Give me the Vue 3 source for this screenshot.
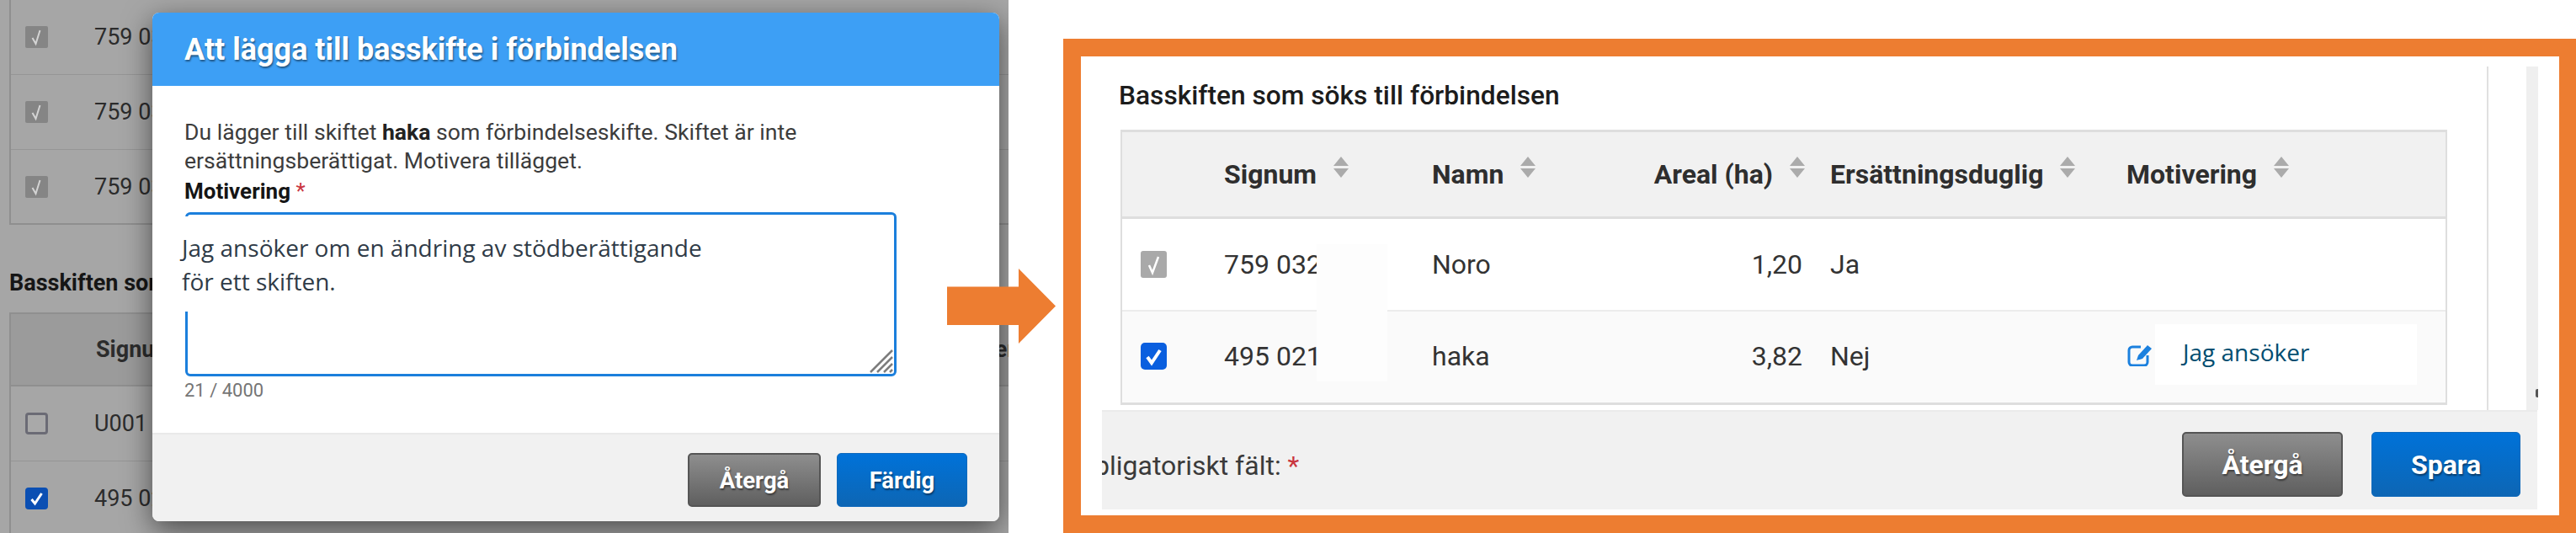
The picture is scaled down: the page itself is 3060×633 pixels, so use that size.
<template>
  <main class="page">
    <section class="backdrop">
      <div class="bg-table bg-table-top">
        <div v-for="row in 3" :key="row" class="bg-row">
          <span class="box box-dim"><svg viewBox="0 0 26 26"><path d="M8 14l4 7 5-16" /></svg></span>
          <span class="bg-sig">759 032</span>
        </div>
      </div>
      <h2 class="bg-title">Basskiften som söks till förbindelsen</h2>
      <div class="bg-table bg-table-low">
        <div class="bg-head">
          <span class="bg-sig">Signum</span>
          <span class="bg-last">Motivering</span>
        </div>
        <div class="bg-row">
          <span class="box box-empty"></span>
          <span class="bg-sig">U001</span>
        </div>
        <div class="bg-row">
          <span class="box box-dark"><svg viewBox="0 0 26 26"><path d="M7 14l4 5 8-12" /></svg></span>
          <span class="bg-sig">495 021</span>
        </div>
      </div>

      <div class="modal">
        <header class="modal-head">Att lägga till basskifte i förbindelsen</header>
        <div class="modal-body">
          <p>Du lägger till skiftet <b>haka</b> som förbindelseskifte. Skiftet är inte<br />ersättningsberättigat. Motivera tillägget.</p>
          <label>Motivering <span class="star">*</span></label>
          <div class="area">
            <div class="pasted">Jag ansöker om en ändring av stödberättigande<br />för ett skiften.</div>
            <svg class="grip" viewBox="0 0 28 28">
              <path d="M1 27L27 1M9 27L27 9M17 27L27 17M24 27l3-3" />
            </svg>
          </div>
          <div class="count">21 / 4000</div>
        </div>
        <footer class="modal-foot">
          <button class="btn btn-grey">Återgå</button>
          <button class="btn btn-blue">Färdig</button>
        </footer>
      </div>
    </section>

    <svg class="arrow" viewBox="0 0 129 90"><path d="M0 21.5h85V0l44 44.500-44 44.500V67H0z" /></svg>

    <section class="frame">
      <div class="panel">
        <div class="panel-body">
          <div class="content">
            <h2>Basskiften som söks till förbindelsen</h2>
            <div class="table">
              <div class="row head">
                <span></span>
                <span v-for="col in columns" :key="col.label" class="th" :class="col.cls">
                  {{ col.label }}
                  <svg class="sort" viewBox="0 0 18 25"><path d="M9 0l9 11H0zM0 14h18l-9 11z" /></svg>
                </span>
              </div>
              <div v-for="row in rows" :key="row.name" class="row" :class="{ alt: row.checked }">
                <span class="check" :class="row.checked ? 'check-on' : 'check-off'">
                  <svg viewBox="0 0 31 32"><path :d="row.checked ? 'M8 17l5 7 10-15' : 'M10 17l4 9 7-19'" /></svg>
                </span>
                <span>{{ row.sig }}</span>
                <span>{{ row.name }}</span>
                <span class="num">{{ row.area }}</span>
                <span>{{ row.ok }}</span>
                <span v-if="row.checked" class="motive">
                  <svg class="edit" viewBox="0 0 32 26">
                    <path class="edit-frame" d="M17 3H7a4 4 0 0 0-4 4v14a4 4 0 0 0 4 4h14a4 4 0 0 0 4-4v-8" />
                    <path class="edit-pen" d="M12 19l2-6L25 1l5 4-11 12z" />
                  </svg>
                  <span class="note">Jag ansöker</span>
                </span>
              </div>
              <div class="patch"></div>
            </div>
          </div>
          <div class="gutter"><i></i></div>
        </div>
        <footer class="panel-foot">
          <span class="required-clip"><span class="required">Obligatoriskt fält: <span class="star">*</span></span></span>
          <button class="btn btn-grey big back">Återgå</button>
          <button class="btn btn-blue big save">Spara</button>
        </footer>
      </div>
    </section>
  </main>
</template>

<script setup>
const columns = [
  { label: 'Signum', cls: '' },
  { label: 'Namn', cls: '' },
  { label: 'Areal (ha)', cls: 'right' },
  { label: 'Ersättningsduglig', cls: '' },
  { label: 'Motivering', cls: '' }
]

const rows = [
  { sig: '759 032', name: 'Noro', area: '1,20', ok: 'Ja', checked: false },
  { sig: '495 021', name: 'haka', area: '3,82', ok: 'Nej', checked: true }
]
</script>

<style>
html,
body {
  background: #fff;
}
</style>

<style scoped>
.page {
  position: relative;
  display: flex;
  width: 3060px;
  height: 633px;
  overflow: hidden;
  background: #fff;
  font-family: Roboto, "Liberation Sans", sans-serif;
  color: #333;
}

/* left screenshot: dimmed page behind the dialog */
.backdrop {
  position: relative;
  flex: 0 0 1198px;
  height: 633px;
  overflow: hidden;
  background: #a6a6a6;
  color: #2c2c2c;
}

.bg-table {
  margin-left: 11px;
  border-left: 2px solid #8f8f8f;
  font-size: 27px;
}

.bg-table-top {
  height: 265px;
  border-bottom: 2px solid #8f8f8f;
}

.bg-row {
  display: flex;
  align-items: center;
  height: 88px;
  border-bottom: 1px solid #959595;
}

.bg-table-top .bg-row:last-child {
  border-bottom: 0;
}

.bg-head {
  position: relative;
  display: flex;
  align-items: center;
  height: 84px;
  border-top: 2px solid #8f8f8f;
  border-bottom: 2px solid #8f8f8f;
  background: #9b9b9b;
  font-weight: 700;
  font-size: 27px;
}

.bg-sig {
  margin-left: 55px;
  white-space: nowrap;
}

.bg-head .bg-sig {
  margin-left: 101px;
}

.bg-last {
  position: absolute;
  left: 1100px;
}

.bg-title {
  margin: 53px 0 0 11px;
  height: 51px;
  font-size: 27px;
  font-weight: 700;
  line-height: 32px;
  color: #161616;
  white-space: nowrap;
}

.box {
  flex: none;
  width: 27px;
  height: 26px;
  margin-left: 17px;
  border-radius: 2px;
  box-sizing: border-box;
}

.box svg {
  display: block;
  width: 100%;
  height: 100%;
  fill: none;
  stroke: #d4d4d4;
  stroke-width: 2;
}

.box-dim {
  background: #858585;
}

.box-empty {
  border: 3px solid #6b6b75;
  border-radius: 4px;
  background: #a9a9a9;
}

.box-dark {
  border-radius: 4px;
  background: #0b4fb3;
}

.box-dark svg {
  stroke: #fff;
  stroke-width: 3;
}

.modal {
  position: absolute;
  left: 181px;
  top: 15px;
  display: flex;
  flex-direction: column;
  width: 1006px;
  height: 604px;
  border-radius: 8px;
  overflow: hidden;
  background: #fff;
  box-shadow: 0 10px 34px rgba(0, 0, 0, 0.55);
}

.modal-head {
  flex: none;
  height: 87px;
  padding-left: 38px;
  background: #3d9ff5;
  color: #fff;
  font-size: 36px;
  font-weight: 700;
  line-height: 88px;
  text-shadow: 1px 2px 2px rgba(0, 0, 0, 0.45);
  white-space: nowrap;
}

.modal-body {
  flex: 1;
  padding: 38px 0 0 38px;
}

.modal-body p {
  margin: 0;
  font-size: 26.6px;
  line-height: 34px;
  color: #3c3c3c;
}

.modal-body b {
  color: #222;
}

.modal-body label {
  display: block;
  height: 34px;
  padding-top: 2px;
  margin-bottom: -2px;
  font-size: 26px;
  font-weight: 700;
  line-height: 34px;
  color: #151515;
}

.star {
  color: #c9353f;
  font-weight: 400;
}

.area {
  position: relative;
  box-sizing: border-box;
  width: 845px;
  height: 195px;
  margin: 10px 0 0 1px;
  border: 3px solid #1b7fdc;
  border-radius: 6px;
}

.pasted {
  position: absolute;
  left: -7px;
  top: 2px;
  width: 670px;
  height: 113px;
  background: #fff;
  font-family: "Open Sans", "Noto Sans", sans-serif;
  font-size: 28px;
  line-height: 40px;
  padding-top: 17px;
  box-sizing: border-box;
  color: #2f3b47;
  white-space: nowrap;
}

.grip {
  position: absolute;
  right: 1px;
  bottom: 1px;
  width: 28px;
  height: 28px;
  fill: none;
  stroke: #7d7d7d;
  stroke-width: 2.500;
}

.count {
  margin: 4px 0 0 0;
  font-size: 22px;
  line-height: 26px;
  color: #757575;
}

.modal-foot {
  flex: none;
  display: flex;
  justify-content: flex-end;
  gap: 19px;
  box-sizing: border-box;
  height: 105px;
  padding: 22px 38px 0 0;
  border-top: 2px solid #e9e9e9;
  background: #f1f1f1;
}

.btn {
  box-sizing: border-box;
  width: 158px;
  height: 64px;
  border-radius: 5px;
  font-family: inherit;
  font-size: 27.500px;
  font-weight: 700;
  color: #fff;
  text-shadow: 1px 2px 2px rgba(0, 0, 0, 0.45);
}

.btn-grey {
  border: 2px solid #555;
  background: linear-gradient(#8e8e8e, #5f5f5f);
}

.btn-blue {
  width: 155px;
  border: 1px solid #0f69bb;
  background: linear-gradient(#0072d9, #0d66b4);
}

.arrow {
  position: absolute;
  left: 1125px;
  top: 319px;
  width: 129px;
  height: 90px;
  fill: #ed7d31;
}

/* right screenshot: framed in orange */
.frame {
  flex: 1;
  box-sizing: border-box;
  height: 587px;
  margin: 46px 0 0 65px;
  border: 21px solid #ed7d31;
  background: #fff;
  padding: 12px 25px 7px;
}

.panel {
  display: flex;
  flex-direction: column;
  height: 100%;
}

.panel-body {
  flex: 1;
  display: flex;
  min-height: 0;
}

.content {
  box-sizing: border-box;
  width: 1647px;
  padding: 0 0 0 22px;
  border-right: 2px solid #e0e0e0;
}

.content h2 {
  margin: 0 0 0 -2px;
  height: 75px;
  font-size: 31.700px;
  font-weight: 500;
  line-height: 69px;
  color: #1c1c1c;
  white-space: nowrap;
}

.gutter {
  display: flex;
  align-items: flex-end;
  justify-content: flex-end;
  box-sizing: border-box;
  width: 14px;
  margin-left: 45px;
  padding-bottom: 15px;
  background: #efefef;
}

.gutter i {
  width: 3px;
  height: 10px;
  background: #555;
  border-radius: 2px 0 0 2px;
}

.table {
  position: relative;
  box-sizing: border-box;
  width: 1576px;
  border: 2px solid #dedede;
  border-top-width: 3px;
  border-bottom-width: 3px;
  font-size: 32px;
  color: #333;
}

.row {
  display: grid;
  grid-template-columns: 121px 247px 264px 209px 352px 1fr;
  align-items: center;
  height: 108px;
  border-bottom: 2px solid #ececec;
  white-space: nowrap;
}

.row:nth-child(3) {
  border-bottom: 0;
}

.head {
  height: 100px;
  background: #f1f1f1;
  border-bottom: 3px solid #dedede;
}

.alt {
  height: 106px;
  padding-bottom: 2px;
  background: #fafafa;
}

.th {
  display: flex;
  align-items: center;
  font-weight: 700;
  color: #2e2e2e;
}

.right {
  justify-content: flex-end;
  padding-right: 30px;
}

.sort {
  flex: none;
  width: 18px;
  height: 25px;
  margin: -17px 0 0 20px;
  fill: #ababab;
}

.check {
  width: 31px;
  height: 32px;
  margin-left: 22px;
  border-radius: 3px;
}

.check svg {
  display: block;
  fill: none;
  stroke: #fff;
}

.check-off {
  background: #a9a9a9;
}

.check-off svg {
  stroke-width: 2.500;
}

.check-on {
  background: #0a5fdf;
  border-radius: 5px;
}

.check-on svg {
  stroke-width: 4;
}

.num {
  text-align: right;
  padding-right: 33px;
}

.motive {
  display: flex;
  align-items: center;
}

.edit {
  flex: none;
  width: 32px;
  height: 26px;
  margin-top: -2px;
}

.edit-frame {
  fill: none;
  stroke: #1b80de;
  stroke-width: 3;
}

.edit-pen {
  fill: #1b80de;
}

.note {
  margin-left: 2px;
  box-sizing: border-box;
  width: 311px;
  height: 72px;
  margin-top: -4px;
  padding-left: 33px;
  background: #fff;
  font-family: "Open Sans", "Noto Sans", sans-serif;
  font-size: 28px;
  line-height: 66px;
  color: #004d70;
}

.patch {
  position: absolute;
  left: 231px;
  top: 133px;
  width: 84px;
  height: 163px;
  background: #fdfdfd;
}

.panel-foot {
  flex: none;
  display: flex;
  align-items: center;
  box-sizing: border-box;
  width: 1705px;
  height: 118px;
  padding-right: 20px;
  overflow: hidden;
  border-top: 2px solid #ebebeb;
  background: #f1f1f1;
}

.required-clip {
  margin: 12px auto 0 0;
  overflow: hidden;
}

.required {
  display: block;
  margin-left: -31px;
  font-size: 32px;
  color: #3a3a3a;
  white-space: nowrap;
}

.big {
  height: 77px;
  font-size: 32px;
}

.back {
  width: 191px;
  margin-top: 9px;
}

.save {
  width: 177px;
  margin: 9px 0 0 34px;
}
</style>
